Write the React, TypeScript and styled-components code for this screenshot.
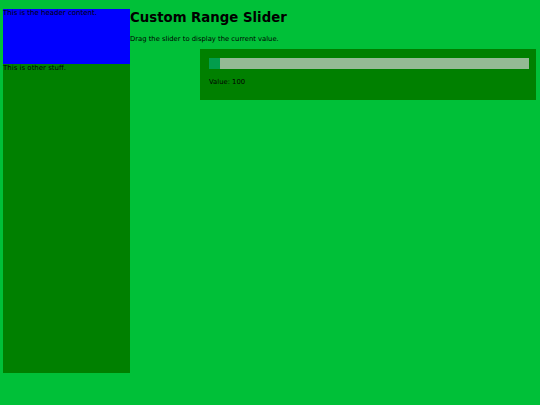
import styled, { createGlobalStyle } from "styled-components";

const Global = createGlobalStyle`
  html, body {
    margin: 0;
    padding: 0;
    background: #00c038;
    font-family: "DejaVu Sans", Verdana, sans-serif;
    color: #000;
  }
`

export default function App() {
  return (
    <>
      <Global />
      <Page>
        <Sidebar>
          <Header>This is the header content.</Header>
          <Other>This is other stuff.</Other>
        </Sidebar>
        <Main>
          <Title>Custom Range Slider</Title>
          <Intro>Drag the slider to display the current value.</Intro>
          <Panel>
            <Slider type="range" min={100} max={1000} defaultValue={100} />
            <Value>Value: 100</Value>
          </Panel>
        </Main>
      </Page>
    </>
  )
}

const Page = styled.div`
  display: flex;
  padding: 9px 4px 0 3px;
`

const Sidebar = styled.div`
  width: 127px;
  display: flex;
  flex-direction: column;
  flex-shrink: 0;
`

const Header = styled.div`
  height: 55px;
  background: #0000ff;
  font-size: 7px;
  line-height: 9px;
`

const Other = styled.div`
  height: 309px;
  background: #008000;
  font-size: 7px;
  line-height: 9px;
`

const Main = styled.div`
  flex: 1;
  display: flex;
  flex-direction: column;
`

const Title = styled.h1`
  margin: 0;
  font-size: 13.3px;
  font-weight: bold;
  line-height: 18px;
`

const Intro = styled.p`
  margin: 8px 0 5px;
  font-size: 6.8px;
  line-height: 9px;
`

const Panel = styled.div`
  margin-left: 70px;
  background: #008000;
  padding: 9px 7px 13px 9px;
  display: flex;
  flex-direction: column;
  gap: 9px;
`

const Slider = styled.input`
  -webkit-appearance: none;
  appearance: none;
  width: 100%;
  height: 11px;
  margin: 0;
  background: #d3d3d3;
  opacity: 0.7;
  outline: none;
  &::-webkit-slider-thumb {
    -webkit-appearance: none;
    appearance: none;
    width: 11px;
    height: 11px;
    background: #04aa6d;
    cursor: pointer;
  }
`

const Value = styled.div`
  font-size: 6.8px;
  line-height: 9px;
`
